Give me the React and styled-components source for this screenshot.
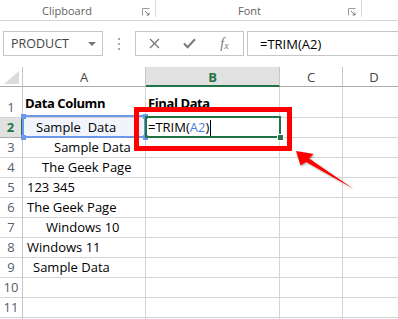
import React from 'react';
import styled, { createGlobalStyle } from 'styled-components';

const GREEN = '#217346';
const GRID = '#d4d4d4';
const HEAD_LINE = '#c6c6c6';

// row 12 only peeks in at the bottom edge, so its number is left out
const rows = [
  { n: 1, a: 'Data Column', ai: 2, b: 'Final Data', bi: 2, bold: true, tall: true },
  { n: 2, a: 'Sample  Data', ai: 13, active: true },
  { n: 3, a: 'Sample Data', ai: 31 },
  { n: 4, a: 'The Geek Page', ai: 19 },
  { n: 5, a: '123 345', ai: 4 },
  { n: 6, a: 'The Geek Page', ai: 4 },
  { n: 7, a: 'Windows 10', ai: 23 },
  { n: 8, a: 'Windows 11', ai: 4 },
  { n: 9, a: 'Sample Data', ai: 10 },
  { n: 10 },
  { n: 11 },
  { n: 12, hidden: true },
];

const columns = ['A', 'B', 'C', 'D'];

const Launcher = () => (
  <LauncherIcon width="8" height="8" viewBox="0 0 8 8">
    <path d="M0.5 7.5V0.5M0.5 0.5H7.5" stroke="#9a9a9a" strokeWidth="1" fill="none" />
    <path d="M3 3L7 7M7 4.5V7H4.5" stroke="#7a7a7a" strokeWidth="1" fill="none" />
  </LauncherIcon>
);

const App = () => {
  return (
    <Page>
      <GlobalStyle />
      <Ribbon>
        <RibbonGroup $w={156}>
          <GroupLabel $indent={42}>Clipboard</GroupLabel>
          <Launcher />
        </RibbonGroup>
        <RibbonGroup $w={206}>
          <GroupLabel $indent={82}>Font</GroupLabel>
          <Launcher />
        </RibbonGroup>
      </Ribbon>

      <FormulaBar>
        <NameBox>
          <span>PRODUCT</span>
          <Caret />
        </NameBox>
        <Grip>
          <i />
          <i />
          <i />
        </Grip>
        <ButtonBox>
          <BarButton>
            <svg width="11" height="11" viewBox="0 0 11 11">
              <path d="M1 1L10 10M10 1L1 10" stroke="#777" strokeWidth="1.3" />
            </svg>
          </BarButton>
          <BarButton>
            <svg width="13" height="11" viewBox="0 0 13 11">
              <path d="M1 5.5L4.6 9.2L12 1.2" stroke="#777" strokeWidth="2" fill="none" />
            </svg>
          </BarButton>
          <BarButton>
            <Fx>
              f<sub>x</sub>
            </Fx>
          </BarButton>
        </ButtonBox>
        <FormulaInput>=TRIM(A2)</FormulaInput>
      </FormulaBar>

      <SheetWrap>
        <Sheet>
          <Corner>
            <svg width="15" height="13" viewBox="0 0 15 13">
              <polygon points="15,0 15,13 0,13" fill="#dcdcdc" />
            </svg>
          </Corner>
          {columns.map((c) => (
            <ColHead key={c} $active={c === 'B'}>
              {c}
            </ColHead>
          ))}
          {rows.map((r) => (
            <React.Fragment key={r.n}>
              <RowHead $active={r.active}>{r.hidden ? '' : r.n}</RowHead>
              <Cell $indent={r.ai} $bold={r.bold} $tall={r.tall} $tint={r.active}>
                {r.a}
              </Cell>
              <Cell $indent={r.bi ?? 2} $bold={r.bold} $tall={r.tall}>
                {r.active ? (
                  <>
                    =TRIM(<Ref>A2</Ref>)<TextCursor />
                  </>
                ) : (
                  r.b
                )}
              </Cell>
              <Cell />
              <Cell />
            </React.Fragment>
          ))}
        </Sheet>

        <RefBox>
          <Handle $x={-3} $y={-3} />
          <Handle $x={119} $y={-3} />
          <Handle $x={-3} $y={18} />
          <Handle $x={119} $y={18} />
        </RefBox>
        <ActiveCell>
          <FillHandle />
        </ActiveCell>
        <Callout />
        <Arrow width="70" height="50" viewBox="0 0 70 50">
          <polygon
            points="6,6 23.5,9 19,13.5 63,43.5 16,17 10.5,20.5"
            fill="#ff0000"
          />
        </Arrow>
      </SheetWrap>
    </Page>
  );
};

const GlobalStyle = createGlobalStyle`
  html, body {
    margin: 0;
    padding: 0;
    background: #fff;
  }
  body {
    font-family: "Open Sans", "Liberation Sans", sans-serif;
    color: #000;
  }
`;

const Page = styled.div`
  width: 398px;
  height: 319px;
  overflow: hidden;
  background: #fff;
`;

const Ribbon = styled.div`
  display: flex;
  align-items: flex-start;
  height: 20px;
  border-bottom: 1px solid #d5d5d5;
`;

const RibbonGroup = styled.div`
  display: flex;
  align-items: center;
  box-sizing: border-box;
  width: ${(p) => p.$w}px;
  height: 17px;
  border-right: 1px solid #dadada;
`;

const GroupLabel = styled.span`
  padding-left: ${(p) => p.$indent}px;
  padding-top: 5px;
  font-size: 11px;
  color: #5f5f5f;
  line-height: 14px;
`;

const LauncherIcon = styled.svg`
  margin-left: auto;
  margin-right: 5px;
  margin-top: 7px;
`;

const FormulaBar = styled.div`
  display: flex;
  height: 25px;
  margin-top: 10px;
`;

const NameBox = styled.div`
  display: flex;
  align-items: center;
  justify-content: space-between;
  box-sizing: border-box;
  width: 100px;
  margin-left: 3px;
  padding: 0 6px 0 7px;
  border: 1px solid ${HEAD_LINE};
  font-size: 12.5px;
  color: #444;
`;

const Caret = styled.span`
  width: 0;
  height: 0;
  border-left: 4px solid transparent;
  border-right: 4px solid transparent;
  border-top: 4px solid #777;
`;

const Grip = styled.div`
  display: flex;
  flex-direction: column;
  align-items: center;
  justify-content: center;
  gap: 3px;
  width: 32px;

  i {
    display: block;
    width: 2px;
    height: 2px;
    background: #a8a8a8;
  }
`;

const ButtonBox = styled.div`
  display: flex;
  align-items: center;
  box-sizing: border-box;
  width: 109px;
  padding-left: 1px;
  border: 1px solid ${HEAD_LINE};
`;

const BarButton = styled.div`
  display: flex;
  align-items: center;
  justify-content: center;
  width: 35px;
`;

const Fx = styled.span`
  font-family: "Liberation Serif", serif;
  font-style: italic;
  font-size: 14px;
  color: #777;
  line-height: 1;

  sub {
    font-size: 10px;
    vertical-align: baseline;
    position: relative;
    top: 1px;
  }
`;

const FormulaInput = styled.div`
  flex: 1;
  display: flex;
  align-items: center;
  margin-left: 3px;
  padding-left: 12px;
  border: 1px solid ${HEAD_LINE};
  border-right: none;
  font-size: 13px;
  color: #000;
`;

const SheetWrap = styled.div`
  position: relative;
  margin-top: 11px;
`;

const Sheet = styled.div`
  display: grid;
  grid-template-columns: 23px 123px 134px 63px 63px;
  grid-template-rows: 20px 31px repeat(12, 20px);
  font-size: 13px;
`;

const Corner = styled.div`
  display: flex;
  align-items: flex-end;
  justify-content: flex-end;
  box-sizing: border-box;
  padding: 0 3px 2px 0;
  border-right: 1px solid ${HEAD_LINE};
  border-bottom: 1px solid #ababab;
`;

const ColHead = styled.div`
  display: flex;
  align-items: center;
  justify-content: center;
  box-sizing: border-box;
  padding-top: 1px;
  border-right: 1px solid ${HEAD_LINE};
  border-bottom: ${(p) => (p.$active ? `2px solid ${GREEN}` : '1px solid #ababab')};
  background: ${(p) => (p.$active ? '#e1e1e1' : '#fff')};
  color: ${(p) => (p.$active ? GREEN : '#444')};
  font-weight: ${(p) => (p.$active ? 700 : 400)};
  font-size: 13px;
`;

const RowHead = styled.div`
  display: flex;
  align-items: flex-end;
  justify-content: center;
  box-sizing: border-box;
  border-right: ${(p) => (p.$active ? `2px solid ${GREEN}` : `1px solid ${HEAD_LINE}`)};
  border-bottom: 1px solid ${(p) => (p.$active ? '#ababab' : GRID)};
  background: ${(p) => (p.$active ? '#e1e1e1' : '#fff')};
  color: ${(p) => (p.$active ? GREEN : '#56606e')};
  font-weight: ${(p) => (p.$active ? 700 : 400)};
  font-size: 13px;
  line-height: 19px;
`;

const Cell = styled.div`
  display: flex;
  align-items: flex-end;
  box-sizing: border-box;
  padding-left: ${(p) => p.$indent ?? 2}px;
  padding-bottom: ${(p) => (p.$tall ? 4 : 0)}px;
  border-right: 1px solid ${GRID};
  border-bottom: 1px solid ${GRID};
  background: ${(p) => (p.$tint ? '#f1f4fb' : 'transparent')};
  font-weight: ${(p) => (p.$bold ? 700 : 400)};
  letter-spacing: ${(p) => (p.$bold ? '-0.4px' : '0')};
  line-height: 19px;
  white-space: pre;
`;

const Ref = styled.span`
  color: #4a7fdd;
`;

const TextCursor = styled.span`
  display: inline-block;
  width: 1px;
  height: 16px;
  margin: 0 0 1px 1px;
  background: #000;
  align-self: flex-end;
`;

const RefBox = styled.div`
  position: absolute;
  left: 22px;
  top: 48px;
  width: 124px;
  height: 23px;
  box-sizing: border-box;
  border: 2px solid #6b98e8;
  pointer-events: none;
`;

const Handle = styled.span`
  position: absolute;
  left: ${(p) => p.$x}px;
  top: ${(p) => p.$y}px;
  width: 5px;
  height: 5px;
  background: #6b98e8;
`;

const ActiveCell = styled.div`
  position: absolute;
  left: 145px;
  top: 49px;
  width: 136px;
  height: 22px;
  box-sizing: border-box;
  border: 2px solid ${GREEN};
`;

const FillHandle = styled.span`
  position: absolute;
  right: -5px;
  bottom: -5px;
  width: 5px;
  height: 5px;
  background: ${GREEN};
  border: 1px solid #fff;
`;

const Callout = styled.div`
  position: absolute;
  left: 134px;
  top: 40px;
  width: 158px;
  height: 44px;
  box-sizing: border-box;
  border: 5px solid #ff0000;
`;

const Arrow = styled.svg`
  position: absolute;
  left: 290px;
  top: 78px;
  overflow: visible;
  filter: drop-shadow(1px 1px 1px rgba(0, 0, 0, 0.35));
`;

export default App;
